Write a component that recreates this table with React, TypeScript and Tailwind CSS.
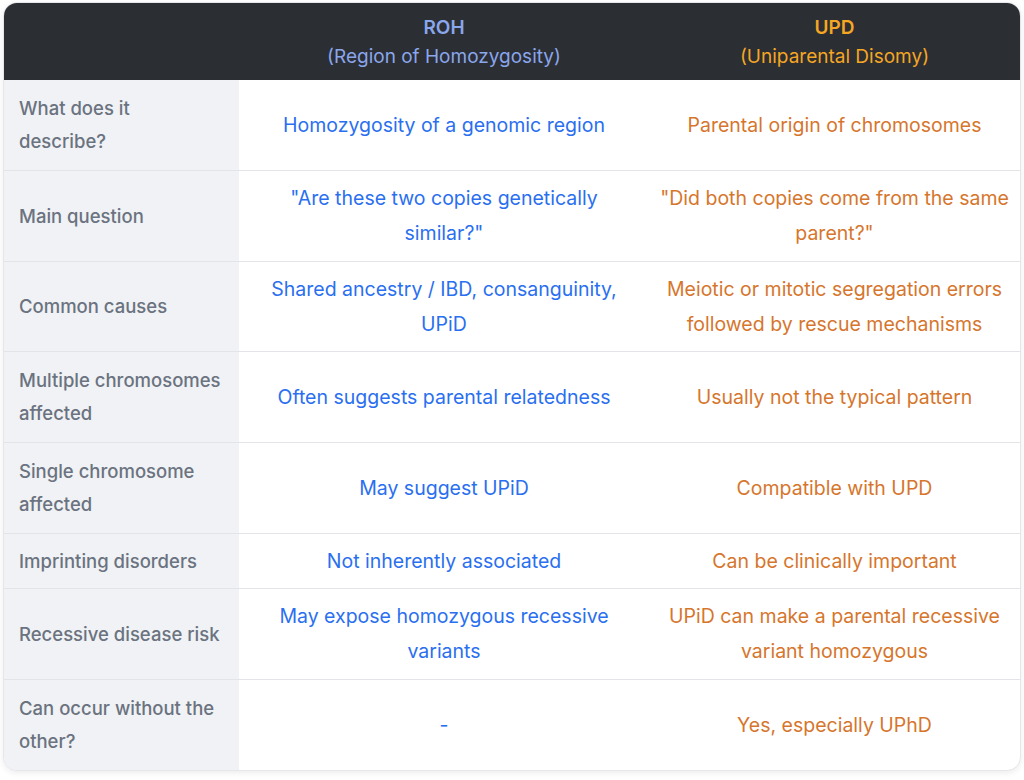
import React from "react";

const rows: { label: React.ReactNode; roh: string; upd: string; h: string }[] = [
  { label: <>What does it<br />describe?</>, roh: "Homozygosity of a genomic region", upd: "Parental origin of chromosomes", h: "h-[90px]" },
  { label: "Main question", roh: "\"Are these two copies genetically similar?\"", upd: "\"Did both copies come from the same parent?\"", h: "h-[91px]" },
  { label: "Common causes", roh: "Shared ancestry / IBD, consanguinity, UPiD", upd: "Meiotic or mitotic segregation errors followed by rescue mechanisms", h: "h-[90px]" },
  { label: "Multiple chromosomes affected", roh: "Often suggests parental relatedness", upd: "Usually not the typical pattern", h: "h-[91px]" },
  { label: "Single chromosome affected", roh: "May suggest UPiD", upd: "Compatible with UPD", h: "h-[91px]" },
  { label: "Imprinting disorders", roh: "Not inherently associated", upd: "Can be clinically important", h: "h-[55px]" },
  { label: "Recessive disease risk", roh: "May expose homozygous recessive variants", upd: "UPiD can make a parental recessive variant homozygous", h: "h-[91px]" },
  { label: "Can occur without the other?", roh: "-", upd: "Yes, especially UPhD", h: "h-[91px]" },
];

export default function App() {
  return (
    <div className="w-[1024px] h-[780px] bg-white pt-[2px] pl-[3px] pr-[3px]" style={{ fontFamily: "Inter, 'Noto Sans', sans-serif" }}>
      <div className="rounded-[14px] overflow-hidden border border-[#e5e7eb] shadow-[0_2px_6px_rgba(0,0,0,0.08)] bg-white">
        <div className="grid grid-cols-[235px_410px_1fr] bg-[#2b2e33] h-[77px]">
          <div />
          <div className="flex flex-col items-center justify-center text-[#8aa6ec] text-[19px] leading-[29px]">
            <span className="font-semibold">ROH</span>
            <span>(Region of Homozygosity)</span>
          </div>
          <div className="flex flex-col items-center justify-center text-[#f5a623] text-[19px] leading-[29px]">
            <span className="font-semibold">UPD</span>
            <span>(Uniparental Disomy)</span>
          </div>
        </div>
        {rows.map((r, i) => (
          <div key={i} className={`grid grid-cols-[235px_410px_1fr] ${r.h} ${i > 0 ? "border-t border-[#e2e4e8]" : ""}`}>
            <div className="bg-[#f0f2f5] flex items-center pl-[15px] pr-[8px] text-[#6b7280] font-medium text-[18.5px] leading-[33px]">
              <span>{r.label}</span>
            </div>
            <div className="flex items-center justify-center text-center px-[22px] text-[#2a6ff0] text-[19.5px] leading-[35px]">
              {r.roh}
            </div>
            <div className="flex items-center justify-center text-center px-[8px] text-[#d6762d] text-[19.5px] leading-[35px]">
              {r.upd}
            </div>
          </div>
        ))}
      </div>
    </div>
  );
}
